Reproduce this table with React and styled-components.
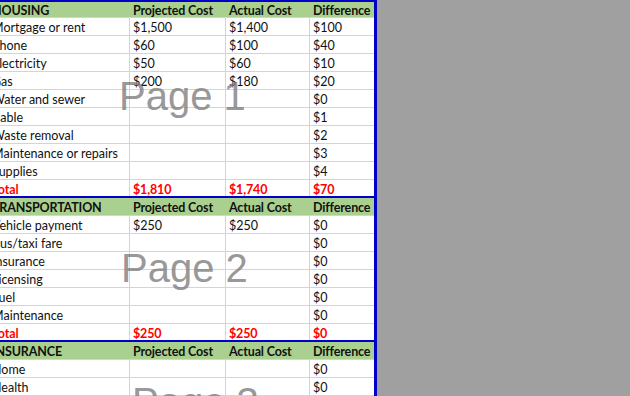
import React from 'react';
import styled, { createGlobalStyle } from 'styled-components';

const GlobalStyle = createGlobalStyle`
  html, body {
    margin: 0;
    padding: 0;
    background: #a0a0a0;
  }
  body {
    font-family: Lato, "Liberation Sans", Arial, sans-serif;
  }
`;

const Screen = styled.div`
  width: 630px;
  height: 396px;
  overflow: hidden;
  background: #a0a0a0;
`;

const Sheet = styled.div`
  width: 385px;
  height: 396px;
  margin-left: -11px;
  background: #ffffff;
  border-right: 3px solid #0000c8;
  overflow: hidden;
`;

const Page = styled.section`
  position: relative;
  border-top: ${(p) => (p.$first ? '2px solid #0000c8' : 'none')};
  border-bottom: ${(p) => (p.$last ? 'none' : '2px solid #0000c8')};
`;

const Row = styled.div`
  display: grid;
  grid-template-columns: 141px 96px 84px 64px;
  height: ${(p) => p.$h || 18}px;
  box-sizing: border-box;
  border-bottom: ${(p) => (p.$end ? 'none' : '1px solid #d4d4d4')};
  background: ${(p) => (p.$header ? '#a9d08e' : 'transparent')};
  font-weight: ${(p) => (p.$header || p.$total ? 700 : 400)};
  letter-spacing: ${(p) => (p.$header || p.$total ? '-0.15px' : '0')};
  color: ${(p) => (p.$total ? '#ff0000' : '#111111')};
`;

const Cell = styled.div`
  box-sizing: border-box;
  padding: ${(p) => p.$pt}px 3px 0;
  font-size: 12.5px;
  line-height: 17px;
  white-space: nowrap;
  overflow: hidden;
  border-right: ${(p) => (p.$noLine ? 'none' : '1px solid #d4d4d4')};
`;

const Watermark = styled.div`
  position: absolute;
  left: ${(p) => p.$left}px;
  top: ${(p) => p.$top}px;
  font-family: "Liberation Sans", Arial, sans-serif;
  font-size: 40px;
  line-height: 1;
  color: rgba(125, 125, 125, 0.8);
  pointer-events: none;
  white-space: nowrap;
`;

const pages = [
  {
    title: 'HOUSING',
    mark: 'Page 1',
    markLeft: 130,
    markTop: 74,
    rows: [
      ['Mortgage or rent', '$1,500', '$1,400', '$100'],
      ['Phone', '$60', '$100', '$40'],
      ['Electricity', '$50', '$60', '$10'],
      ['Gas', '$200', '$180', '$20'],
      ['Water and sewer', '', '', '$0'],
      ['Cable', '', '', '$1'],
      ['Waste removal', '', '', '$2'],
      ['Maintenance or repairs', '', '', '$3'],
      ['Supplies', '', '', '$4'],
    ],
    total: ['Total', '$1,810', '$1,740', '$70'],
  },
  {
    title: 'TRANSPORTATION',
    mark: 'Page 2',
    markLeft: 132,
    markTop: 50,
    rows: [
      ['Vehicle payment', '$250', '$250', '$0'],
      ['Bus/taxi fare', '', '', '$0'],
      ['Insurance', '', '', '$0'],
      ['Licensing', '', '', '$0'],
      ['Fuel', '', '', '$0'],
      ['Maintenance', '', '', '$0'],
    ],
    total: ['Total', '$250', '$250', '$0'],
  },
  {
    title: 'INSURANCE',
    mark: 'Page 3',
    markLeft: 143,
    markTop: 40,
    rows: [
      ['Home', '', '', '$0'],
      ['Health', '', '', '$0'],
      ['Life', '', '', '$0'],
      ['Other', '', '', '$0'],
    ],
    last: true,
  },
];

const DataRow = ({ values, pt = 1, ...rest }) => (
  <Row {...rest}>
    {values.map((v, i) => (
      <Cell key={i} $pt={pt} $noLine={rest.$header || i === 3}>
        {v}
      </Cell>
    ))}
  </Row>
);

export default function App() {
  return (
    <>
      <GlobalStyle />
      <Screen>
        <Sheet>
          {pages.map((pg, idx) => (
            <Page key={pg.title} $first={idx === 0} $last={pg.last}>
              <DataRow
                $header
                $h={idx === 0 ? 16 : 18}
                pt={idx === 0 ? 0 : 1}
                values={[pg.title, 'Projected Cost', 'Actual Cost', 'Difference']}
              />
              {pg.rows.map((r) => (
                <DataRow key={r[0]} values={r} />
              ))}
              {pg.total && <DataRow $total $end $h={16} values={pg.total} />}
              <Watermark $left={pg.markLeft} $top={pg.markTop}>
                {pg.mark}
              </Watermark>
            </Page>
          ))}
        </Sheet>
      </Screen>
    </>
  );
}
